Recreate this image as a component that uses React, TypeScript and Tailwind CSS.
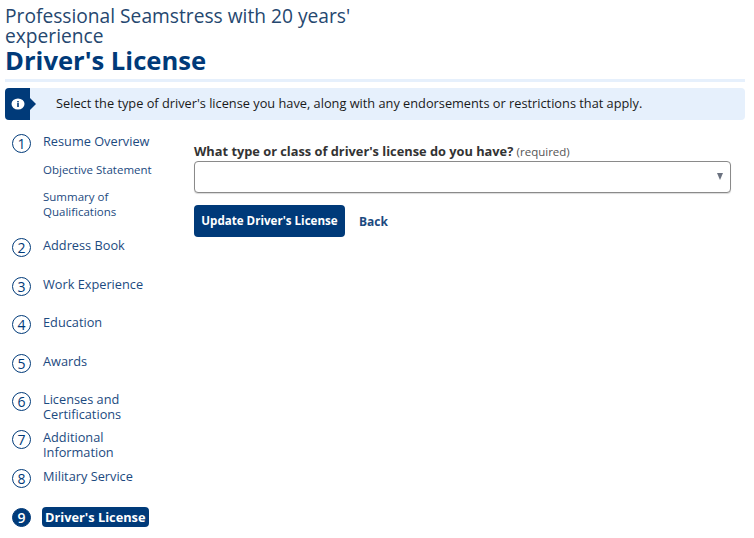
import React from "react";

const font = { fontFamily: '"Open Sans", sans-serif' };

function Step({ n, label, active, subs, h }: { n: number; label: React.ReactNode; active?: boolean; subs?: React.ReactNode[]; h: string }) {
  return (
    <li className={`flex items-start ${h}`}>
      <span
        className={`flex h-[19px] w-[19px] shrink-0 items-center justify-center rounded-full border border-[#003a79] text-[14px] leading-none ${
          active ? "mt-[4px] bg-[#003a79] font-semibold text-white" : "mt-[1px] bg-white text-[#003a79]"
        }`}
      >
        {n}
      </span>
      <div className="ml-[12px] min-w-0">
        {active ? (
          <span className="-ml-[1px] inline-block rounded-[4px] bg-[#003a79] px-[3px] text-[12.8px] leading-[20px] font-bold text-white">{label}</span>
        ) : (
          <span className="mt-[1px] block text-[12.75px] leading-[15px] text-[#1c4a80]">{label}</span>
        )}
        {subs && (
          <div className="mt-[13px] flex flex-col gap-[12px]">
            {subs.map((s, i) => (
              <span key={i} className="block text-[11.5px] leading-[15px] text-[#1c4a80]">{s}</span>
            ))}
          </div>
        )}
      </div>
    </li>
  );
}

export default function App() {
  return (
    <div className="h-[538px] w-[754px] overflow-hidden bg-white" style={font}>
      <header className="ml-[5px] h-[82px] w-[740px] border-b-[3px] border-[#e6f0fc] pb-[1px] pt-[6px]">
        <p className="w-[380px] text-[19.2px] leading-[20px] text-[#25476f]">Professional Seamstress with 20 years' experience</p>
        <h1 className="text-[25.6px] leading-[30px] font-bold text-[#003a79]">Driver's License</h1>
      </header>

      <div className="ml-[5px] mt-[6px] flex h-[32px] w-[740px] items-center rounded-[4px] bg-[#e6f0fc]">
        <div className="relative flex h-full w-[25px] shrink-0 items-center justify-center rounded-l-[4px] bg-[#003a79]">
          <span className="absolute right-[-6px] top-[10px] h-0 w-0 border-y-[6px] border-l-[6px] border-y-transparent border-l-[#003a79]" />
          <svg width="14" height="12" viewBox="0 0 14 12">
            <ellipse cx="7" cy="6" rx="6.5" ry="5.5" fill="#fff" />
            <rect x="6.2" y="5" width="1.6" height="4" fill="#003a79" />
            <rect x="6.2" y="3" width="1.6" height="1.4" fill="#003a79" />
          </svg>
        </div>
        <p className="ml-[26px] text-[12.78px] whitespace-nowrap text-[#1a1a1a]">Select the type of driver's license you have, along with any endorsements or restrictions that apply.</p>
      </div>

      <div className="flex">
        <ol className="ml-[12px] mt-[13px] w-[172px] shrink-0">
          <Step
            n={1}
            h="h-[104px]"
            label="Resume Overview"
            subs={["Objective Statement", <>Summary of<br />Qualifications</>]}
          />
          <Step n={2} h="h-[39px]" label="Address Book" />
          <Step n={3} h="h-[38px]" label="Work Experience" />
          <Step n={4} h="h-[39px]" label="Education" />
          <Step n={5} h="h-[38px]" label="Awards" />
          <Step n={6} h="h-[38px]" label={<>Licenses and<br />Certifications</>} />
          <Step n={7} h="h-[39px]" label={<>Additional<br />Information</>} />
          <Step n={8} h="h-[36px]" label="Military Service" />
          <Step n={9} h="h-[30px]" active label="Driver's License" />
        </ol>

        <main className="ml-[10px] mt-[23px] w-[537px]">
          <label className="block text-[12.8px] leading-[16px] font-bold text-[#333]">
            What type or class of driver's license do you have? <span className="text-[11.5px] font-normal text-[#555]">(required)</span>
          </label>
          <div className="relative mt-[1px] h-[32px] w-full rounded-[4px] border border-[#8a8a8a] bg-white shadow-[0_1px_1px_rgba(0,0,0,0.15)]">
            <span className="absolute right-[7px] top-[11px] h-0 w-0 border-x-[3px] border-t-[7px] border-x-transparent border-t-[#6b7280]" />
          </div>
          <div className="mt-[12px] flex items-center">
            <button className="h-[32px] w-[151px] rounded-[4px] bg-[#003a79] text-[11.6px] font-bold whitespace-nowrap text-white">Update Driver's License</button>
            <a className="ml-[14px] mt-[2px] text-[12px] font-bold text-[#1c4a80]">Back</a>
          </div>
        </main>
      </div>
    </div>
  );
}
